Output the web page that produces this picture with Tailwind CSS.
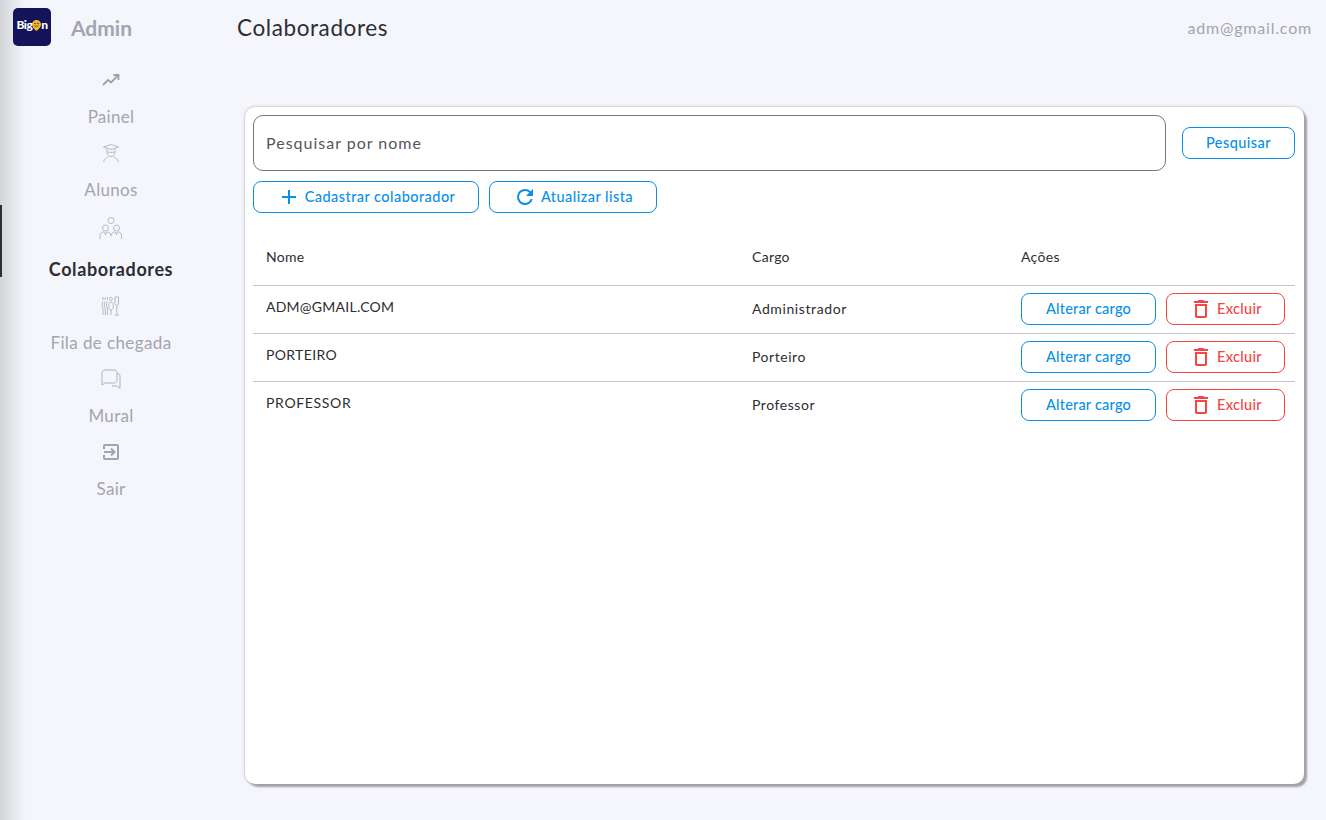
<!DOCTYPE html>
<html lang="pt-BR">
<head>
  <meta charset="UTF-8" />
  <title>Colaboradores</title>
  <script src="https://cdn.jsdelivr.net/npm/@tailwindcss/browser@4"></script>
</head>
<body class="h-[820px] overflow-hidden bg-[#f5f6fb] font-['Lato','Liberation_Sans',sans-serif] text-[#2d2d33]">
<div class="flex h-[820px]">

  <!-- sidebar -->
  <aside class="relative w-[222px] shrink-0">
    <div class="absolute inset-y-0 left-0 w-[26px] bg-gradient-to-r from-[#d4d5d9] to-transparent"></div>
    <div class="flex h-[68px] items-start pl-[13px] pt-2">
      <div class="relative flex h-[38px] w-[38px] items-center justify-center rounded-[5px] bg-[#15135a] pb-[4px] text-[12px] font-black tracking-[-0.5px] text-white">
        Big<svg class="mt-[3px] h-[13px] w-[9px] shrink-0" viewBox="0 0 9 13"><path d="M4.500 0a4.500 4.500 0 0 1 4.500 4.500C9 7.500 4.500 11 4.500 11S0 7.500 0 4.500A4.500 4.500 0 0 1 4.500 0z" fill="#f5b921"/><circle cx="3" cy="3.500" r=".7" fill="#15135a"/><circle cx="6" cy="3.500" r=".7" fill="#15135a"/><path d="M2.500 5.500c1 1.200 3 1.200 4 0" fill="none" stroke="#15135a" stroke-width=".7"/></svg>n
      </div>
      <span class="ml-5 mt-[7px] text-[21px] font-bold leading-[26px] text-[#a3a4b1]">Admin</span>
    </div>
    <nav class="relative text-[#a3a4b1]">
      <a class="flex h-[73px] flex-col items-center">
        <svg class="h-6 w-6" viewBox="0 0 24 24" fill="none" stroke="#9fa0ad" stroke-width="1.800"><path d="M4 17l5-5 3 2.500 7-7"/><path d="M14.500 7h5v5"/></svg>
        <span class="mt-[13px] text-[17px] leading-[23px] tracking-[0.3px]">Painel</span>
      </a>
      <a class="flex h-[73px] flex-col items-center">
        <svg class="h-6 w-6" viewBox="0 0 24 24" fill="none" stroke="#a9aab6" stroke-width="0.800"><path d="M4.500 6L12 3.500 19.500 6 12 8.500z"/><path d="M8 8v3.500c0 2.500 2 4 4 4s4-1.500 4-4V8"/><path d="M4.500 21c.8-3 2.800-4.500 4.800-5M19.500 21c-.8-3-2.800-4.500-4.800-5"/><path d="M8.500 11c2 .5 5 .5 7 0"/></svg>
        <span class="mt-[13px] text-[17px] leading-[23px] tracking-[0.3px]">Alunos</span>
      </a>
      <a class="relative flex h-[80px] flex-col items-center pt-[3px]">
        <span class="absolute -top-[9px] left-0 h-[72px] w-[2px] bg-[#2d2d33]"></span>
        <svg class="h-6 w-6" viewBox="0 0 24 24" fill="none" stroke="#a9aab6" stroke-width="0.800"><circle cx="12" cy="3.500" r="3"/><circle cx="6.500" cy="11" r="3"/><circle cx="17.500" cy="11" r="3"/><path d="M1 22v-3c0-3 2.500-4.500 4-4 1 .3 1.500 1.500 1.500 3 0-1.500 1-3 2.500-3s2.500 1.500 3 4c.5-2.500 1.500-4 3-4s2.500 1.500 2.500 3c0-1.500.5-2.700 1.500-3 1.500-.5 3.500 1 3.500 4v3"/></svg>
        <span class="mt-[17px] text-[18px] font-bold leading-[22px] tracking-[0.6px] text-[#2d2d33]">Colaboradores</span>
      </a>
      <a class="flex h-[73px] flex-col items-center">
        <svg class="h-6 w-6" viewBox="0 0 24 24" fill="none" stroke="#a9aab6" stroke-width="0.800"><path d="M19.500 3h-3.500v6c0 1.500.8 2.500 1.750 2.500s1.750-1 1.750-2.500zM17.750 11.500V21M15.500 21h4.500"/><path d="M12 6.500a1.500 1.500 0 1 0-.1 0zM12 8c-1.800 0-2.300 3-2.300 4.500s1 3.500 2.300 3.500 2.300-2 2.300-3.500S13.800 8 12 8zM12 16v5"/><path d="M4 3v3M6.200 3v3M8.400 3v3M4 7.500c-1.200 2-1.200 4.500 0 6.500v7M6.200 7.500c-1.200 2-1.200 4.500 0 6.500v7M8.400 7.500c-1.200 2-1.200 4.500 0 6.500v7"/></svg>
        <span class="mt-[13px] text-[17px] leading-[23px] tracking-[0.4px]">Fila de chegada</span>
      </a>
      <a class="flex h-[73px] flex-col items-center">
        <svg class="h-6 w-6" viewBox="0 0 24 24" fill="none" stroke="#a9aab6" stroke-width="0.900"><path d="M16 3H6C4 3 3 4 3 6v12l3-2h9c2 0 3-1 3-3V5c0-1-1-2-2-2z" stroke-linejoin="round"/><path d="M18 6.500c2 0 3 1 3 2.500v12.500L18 19h-5"/></svg>
        <span class="mt-[13px] text-[17px] leading-[23px] tracking-[0.3px]">Mural</span>
      </a>
      <a class="flex h-[73px] flex-col items-center">
        <svg class="h-6 w-6" viewBox="0 0 24 24" fill="none" stroke="#a3a4b1" stroke-width="2"><path d="M5 9V6a1 1 0 0 1 1-1h12a1 1 0 0 1 1 1v12a1 1 0 0 1-1 1H6a1 1 0 0 1-1-1v-3"/><path d="M5 12h10M12 8.500l3.500 3.500-3.500 3.500"/></svg>
        <span class="mt-[13px] text-[17px] leading-[23px] tracking-[0.3px]">Sair</span>
      </a>
    </nav>
  </aside>

  <!-- main -->
  <main class="flex min-w-0 flex-1 flex-col pb-9 pl-[15px] pr-[14px]">
    <header class="flex h-[107px] items-start justify-between">
      <h1 class="mt-[14px] text-[22.500px] font-normal leading-[28px] tracking-[0.6px] text-[#2d2d33]">Colaboradores</h1>
      <span class="mt-[18px] text-[16px] leading-[20px] tracking-[0.8px] text-[#a3a4b1]">adm@gmail.com</span>
    </header>

    <section class="mx-2 flex-1 rounded-[10px] bg-white p-2 shadow-[0_0_3px_#a8a8ae,3px_3px_2px_#a0a0a6]">
      <div class="flex items-center">
        <div class="flex h-14 w-[913px] items-center rounded-[10px] border border-[#77767c] px-3 text-[16px] tracking-[1px] text-[#55555c]">Pesquisar por nome</div>
        <button class="ml-4 h-8 w-[113px] rounded-lg border border-[#0a8fe8] text-[14.500px] font-medium tracking-[0.45px] text-[#0a8fe8]">Pesquisar</button>
      </div>
      <div class="mt-[10px] flex gap-[10px]">
        <button class="flex h-8 w-[226px] items-center justify-center gap-1 rounded-lg border border-[#0a8fe8] text-[14.500px] font-medium tracking-[0.45px] text-[#0a8fe8]">
          <svg class="h-6 w-6" viewBox="0 0 24 24" fill="#0a8fe8"><path d="M19 13h-6v6h-2v-6H5v-2h6V5h2v6h6v2z"/></svg>
          Cadastrar colaborador
        </button>
        <button class="flex h-8 w-[168px] items-center justify-center gap-1 rounded-lg border border-[#0a8fe8] text-[14.500px] font-medium tracking-[0.45px] text-[#0a8fe8]">
          <svg class="h-6 w-6" viewBox="0 0 24 24" fill="#0a8fe8"><path d="M17.650 6.350A7.960 7.960 0 0 0 12 4a8 8 0 1 0 7.740 10h-2.080A6 6 0 1 1 12 6c1.660 0 3.140.69 4.220 1.780L13 11h7V4z"/></svg>
          Atualizar lista
        </button>
      </div>

      <div class="mt-5 w-[1042px] text-[14px] tracking-[0.3px]">
        <div class="grid h-[53px] grid-cols-[486px_269px_1fr] items-center border-b border-[#c4c4cc] pb-[5px] [&>span]:pl-[13px]">
          <span>Nome</span><span>Cargo</span><span>Ações</span>
        </div>
        <div class="grid h-12 grid-cols-[486px_269px_1fr] items-center border-b border-[#c4c4cc] pb-px [&>span]:pl-[13px]">
          <span class="mb-[6px] tracking-[0.25px]">ADM@GMAIL.COM</span><span class="mb-[2px] tracking-[0.6px]">Administrador</span>
          <span class="flex gap-[10px]">
            <button class="h-8 w-[135px] rounded-lg border border-[#0a8fe8] text-[14.500px] font-medium tracking-[0.2px] text-[#0a8fe8]">Alterar cargo</button>
            <button class="flex h-8 w-[119px] items-center justify-center gap-1 rounded-lg border border-[#f44444] text-[14.500px] font-medium text-[#f44444]">
              <svg class="h-6 w-6" viewBox="0 0 24 24" fill="#f44444"><path d="M6 19c0 1.100.9 2 2 2h8c1.100 0 2-.9 2-2V7H6v12zM8 9h8v10H8V9zm7.500-5l-1-1h-5l-1 1H5v2h14V4z"/></svg>
              Excluir
            </button>
          </span>
        </div>
        <div class="grid h-12 grid-cols-[486px_269px_1fr] items-center border-b border-[#c4c4cc] pb-px [&>span]:pl-[13px]">
          <span class="mb-[6px] tracking-[0.35px]">PORTEIRO</span><span class="mb-[2px] tracking-[0.55px]">Porteiro</span>
          <span class="flex gap-[10px]">
            <button class="h-8 w-[135px] rounded-lg border border-[#0a8fe8] text-[14.500px] font-medium tracking-[0.2px] text-[#0a8fe8]">Alterar cargo</button>
            <button class="flex h-8 w-[119px] items-center justify-center gap-1 rounded-lg border border-[#f44444] text-[14.500px] font-medium text-[#f44444]">
              <svg class="h-6 w-6" viewBox="0 0 24 24" fill="#f44444"><path d="M6 19c0 1.100.9 2 2 2h8c1.100 0 2-.9 2-2V7H6v12zM8 9h8v10H8V9zm7.500-5l-1-1h-5l-1 1H5v2h14V4z"/></svg>
              Excluir
            </button>
          </span>
        </div>
        <div class="grid h-12 grid-cols-[486px_269px_1fr] items-center border-b border-transparent pb-px [&>span]:pl-[13px]">
          <span class="mb-[6px] tracking-[0.65px]">PROFESSOR</span><span class="mb-[2px] tracking-[0.55px]">Professor</span>
          <span class="flex gap-[10px]">
            <button class="h-8 w-[135px] rounded-lg border border-[#0a8fe8] text-[14.500px] font-medium tracking-[0.2px] text-[#0a8fe8]">Alterar cargo</button>
            <button class="flex h-8 w-[119px] items-center justify-center gap-1 rounded-lg border border-[#f44444] text-[14.500px] font-medium text-[#f44444]">
              <svg class="h-6 w-6" viewBox="0 0 24 24" fill="#f44444"><path d="M6 19c0 1.100.9 2 2 2h8c1.100 0 2-.9 2-2V7H6v12zM8 9h8v10H8V9zm7.500-5l-1-1h-5l-1 1H5v2h14V4z"/></svg>
              Excluir
            </button>
          </span>
        </div>
      </div>
    </section>
  </main>
</div>
</body>
</html>
